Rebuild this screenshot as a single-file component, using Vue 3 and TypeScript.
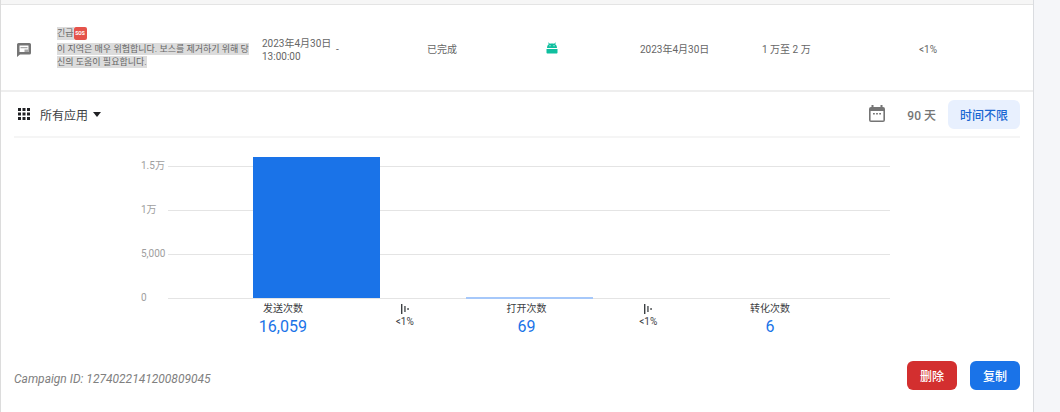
<script setup lang="ts">
interface Metric {
  name: string
  value: number
}

const metrics: Metric[] = [
  { name: '发送次数', value: 16059 },
  { name: '打开次数', value: 69 },
  { name: '转化次数', value: 6 },
]

const axisMax = 15000
const ticks: string[] = ['1.5万', '1万', '5,000', '0']

const barHeight = (value: number): string => `${(value / axisMax) * 100}%`
const format = (value: number): string => value.toLocaleString('en-US')
</script>

<template>
  <div class="page">
    <main class="card">
      <div class="strip"></div>

      <table class="campaign">
        <colgroup>
          <col class="c-icon" /><col class="c-title" /><col class="c-start" /><col class="c-end" />
          <col class="c-status" /><col class="c-platform" /><col class="c-updated" /><col class="c-reach" />
          <col class="c-rate" />
        </colgroup>
        <tbody>
          <tr>
            <td class="kind">
              <svg width="16" height="16" viewBox="0 0 16 16" aria-hidden="true">
                <path
                  fill="#757575"
                  fill-rule="evenodd"
                  d="M2.500 1h11A1.500 1.500 0 0 1 15 2.500v8.500a1.500 1.500 0 0 1-1.500 1.500H4L1 15V2.500A1.500 1.500 0 0 1 2.500 1zM3.500 3.500v6.500h9V3.500z"
                />
                <path fill="#a8a8a8" d="M4.500 5h7v1.200h-7zM8.500 7.500h4V10h-4z" />
              </svg>
            </td>
            <td class="title">
              <div class="headline"><mark>긴급</mark><span class="sos">SOS</span></div>
              <div class="body"><mark>이 지역은 매우 위험합니다. 보스를 제거하기 위해 당신의 도움이 필요합니다.</mark></div>
            </td>
            <td>2023年4月30日<br />13:00:00</td>
            <td>-</td>
            <td>已完成</td>
            <td class="platform">
              <svg width="12" height="12" viewBox="0 0 24 24" role="img" aria-label="Android">
                <g fill="#0fbf9f">
                  <path
                    fill-rule="evenodd"
                    d="M2 12c0-4 1.700-6.500 4-8L4 2.100 5.100 1l2.700 2.700C9.100 3.200 10.500 3 12 3s2.900.2 4.200.7L18.900 1 20 2.100 18 4c2.300 1.500 4 4 4 8zM7 6.500v2h2v-2zm8 0v2h2v-2z"
                  />
                  <path d="M1 14h22v7c0 1.100-.9 2-2 2H3c-1.100 0-2-.9-2-2z" />
                </g>
              </svg>
            </td>
            <td>2023年4月30日</td>
            <td>1 万至 2 万</td>
            <td>&lt;1%</td>
          </tr>
        </tbody>
      </table>

      <section class="details">
        <div class="filters">
          <button type="button" class="apps">
            <svg class="grid-icon" width="12" height="12" viewBox="0 0 12 12" aria-hidden="true">
              <path
                fill="#202124"
                d="M0 0h3v3H0zM4.500 0h3v3h-3zM9 0h3v3H9zM0 4.500h3v3H0zM4.500 4.500h3v3h-3zM9 4.500h3v3H9zM0 9h3v3H0zM4.500 9h3v3h-3zM9 9h3v3H9z"
              />
            </svg>
            <span>所有应用</span>
            <svg width="8" height="5" viewBox="0 0 8 5" aria-hidden="true">
              <path fill="#202124" d="M0 0h8L4 5z" />
            </svg>
          </button>
          <div class="ranges">
            <svg width="16" height="18" viewBox="0 0 16 18" aria-hidden="true">
              <path
                fill="#757575"
                fill-rule="evenodd"
                d="M2.500 0h2v2h7V0h2v2H14a2 2 0 0 1 2 2v11a2 2 0 0 1-2 2H2a2 2 0 0 1-2-2V4a2 2 0 0 1 2-2h.5zM1.600 6v9.400h12.800V6z"
              />
              <path fill="#757575" d="M4 8h1.800v1.600H4zM7.100 8h1.800v1.600H7.100zM10.200 8H12v1.600h-1.800z" />
            </svg>
            <button type="button" class="range">90 天</button>
            <button type="button" class="range selected">时间不限</button>
          </div>
        </div>

        <div class="chart">
          <div class="plot">
            <div class="ticks">
              <div v-for="tick in ticks" :key="tick" class="tick">
                <span>{{ tick }}</span><i></i>
              </div>
            </div>
            <div class="bars">
              <div
                v-for="m in metrics"
                :key="m.name"
                class="bar"
                :class="{ faint: m.value < 100 }"
                :style="{ height: barHeight(m.value) }"
              ></div>
            </div>
          </div>

          <div class="summary">
            <template v-for="(m, i) in metrics" :key="m.name">
              <div v-if="i > 0" class="step">
                <svg width="8" height="12" viewBox="0 0 8 12" aria-hidden="true">
                  <path fill="#3c4043" d="M0 1h1.400v10H0zM3.300 3h1.300v6H3.300zM6.400 5h1.300v2H6.400z" />
                </svg>
                <span>&lt;1%</span>
              </div>
              <div class="metric">
                <span>{{ m.name }}</span>
                <strong>{{ format(m.value) }}</strong>
              </div>
            </template>
          </div>
        </div>

        <footer class="footer">
          <span class="campaign-id">Campaign ID: 1274022141200809045</span>
          <div class="actions">
            <button type="button" class="action delete">删除</button>
            <button type="button" class="action copy">复制</button>
          </div>
        </footer>
      </section>
    </main>
  </div>
</template>

<style>
body {
  margin: 0;
  background: #f5f6f9;
}
</style>

<style scoped>
.page {
  padding-right: 26px;
  font-family: Roboto, 'Noto Sans CJK SC', sans-serif;
  font-size: 10px;
  color: #666;
}

.card {
  box-sizing: border-box;
  min-height: 100vh;
  background: #fff;
  border-left: 1px solid #dcdcdc;
  border-right: 1px solid #dadce0;
}

.strip {
  height: 5px;
  box-sizing: border-box;
  background: #f6f6f6;
  border-bottom: 1px solid #e4e4e4;
}

.campaign {
  width: 100%;
  table-layout: fixed;
  border-collapse: separate;
  border-spacing: 0;
  border-bottom: 2px solid #eee;
}

.campaign td {
  box-sizing: border-box;
  height: 85px;
  padding: 4px 0 0;
  vertical-align: middle;
  line-height: 13px;
}

.c-icon { width: 56px; }
.c-title { width: 205px; }
.c-start { width: 74px; }
.c-end { width: 91px; }
.c-status { width: 119px; }
.c-platform { width: 94px; }
.c-updated { width: 122px; }
.c-reach { width: 157px; }
.c-rate { width: 114px; }

.campaign .kind {
  padding-left: 15px;
}

.kind svg,
.platform svg {
  display: block;
}

.campaign .platform {
  padding: 0;
}

.campaign .title {
  padding: 0 8px 0 0;
  font-family: Roboto, 'Noto Sans CJK KR', sans-serif;
  font-size: 9px;
}

.headline {
  display: flex;
  align-items: center;
  margin-bottom: 3px;
}

mark {
  padding: 1px 0;
  background: #dcdcdc;
  color: #666;
}

.headline mark {
  padding: 0;
}

.body {
  word-break: break-all;
}

.sos {
  width: 13px;
  height: 13px;
  border-radius: 2px;
  background: #e5534b;
  color: #fff;
  font-size: 5px;
  font-weight: 700;
  text-align: center;
}

.details {
  padding: 0 13px;
}

.filters {
  display: flex;
  align-items: center;
  justify-content: space-between;
  height: 44px;
  border-bottom: 2px solid #f5f5f5;
}

button {
  border: 0;
  padding: 0;
  background: none;
  font-family: inherit;
  font-size: 12px;
  color: inherit;
  cursor: pointer;
}

.apps {
  display: flex;
  align-items: center;
  gap: 5px;
  padding-left: 4px;
  color: #3c4043;
}

.grid-icon {
  margin-right: 5px;
}

.ranges {
  display: flex;
  align-items: center;
}

.range {
  height: 29px;
  padding: 0 12px;
  border-radius: 6px;
  font-weight: 500;
  color: #757575;
}

.ranges svg + .range {
  padding-left: 22px;
}

.selected {
  background: #e8f0fe;
  color: #1967d2;
}

.chart {
  margin: 24px 130px 0 127px;
}

.plot {
  display: grid;
}

.ticks,
.bars {
  grid-area: 1 / 1;
}

.ticks {
  display: flex;
  flex-direction: column;
  justify-content: space-between;
  height: 140px;
}

.tick {
  display: flex;
  align-items: center;
  height: 8px;
  line-height: 8px;
  color: #9e9e9e;
}

.tick span {
  width: 27px;
}

.tick i {
  flex: 1;
  height: 1px;
  background: #e4e4e4;
}

.bars {
  display: flex;
  align-items: flex-end;
  justify-content: space-evenly;
  margin: 4px 0 4px 27px;
}

.bar {
  flex: 0 0 127px;
  background: #1a73e8;
}

.faint {
  min-height: 2px;
  margin-bottom: -1px;
  background: #a6c8fa;
}

.faint:last-child {
  background: none;
}

.summary {
  display: grid;
  grid-template-columns: repeat(5, 1fr);
  margin: 1px 59px 0 81px;
}

.metric,
.step {
  display: flex;
  flex-direction: column;
  align-items: center;
  line-height: 12px;
  color: #3c4043;
}

.step span {
  margin-top: 1px;
}

.metric strong {
  margin-top: 2px;
  font-size: 16px;
  font-weight: 400;
  line-height: 20px;
  color: #1a73e8;
}

.footer {
  display: flex;
  align-items: flex-end;
  justify-content: space-between;
  margin-top: 24px;
}

.campaign-id {
  font-size: 12px;
  font-style: italic;
  line-height: 22px;
  color: #808080;
}

.actions {
  display: flex;
  gap: 13px;
}

.action {
  height: 29px;
  padding: 0 13px;
  border-radius: 6px;
  font-weight: 500;
  color: #fff;
}

.delete {
  background: #d32f2f;
}

.copy {
  background: #1a73e8;
}
</style>
